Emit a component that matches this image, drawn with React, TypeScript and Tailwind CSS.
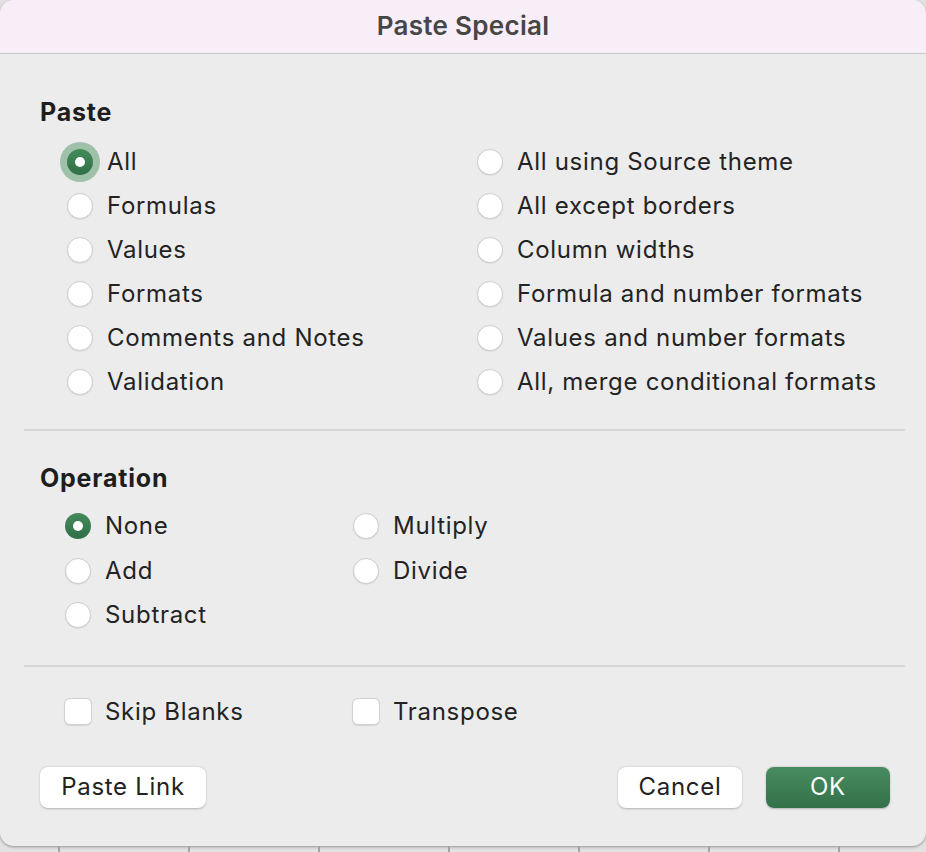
import React from "react";

const font = { fontFamily: "Inter, 'Noto Sans', 'Liberation Sans', sans-serif" };

function Radio({ checked, focus }: { checked?: boolean; focus?: boolean }) {
  if (checked) {
    return (
      <span className="relative flex h-[26px] w-[26px] shrink-0 items-center justify-center">
        {focus && (
          <span className="absolute -inset-[7px] rounded-full bg-[#8db699]/80" />
        )}
        <span className="relative flex h-[26px] w-[26px] items-center justify-center rounded-full bg-gradient-to-b from-[#448a5b] to-[#2f7046]">
          <span className="h-[10px] w-[10px] rounded-full bg-white" />
        </span>
      </span>
    );
  }
  return (
    <span className="h-[26px] w-[26px] shrink-0 rounded-full border border-[#cfcfcf] bg-white shadow-[0_0.5px_1px_rgba(0,0,0,0.12)]" />
  );
}

function RadioRow({ label, checked, focus, h = "h-[44px]" }: { label: string; checked?: boolean; focus?: boolean; h?: string }) {
  return (
    <div className={`flex ${h} items-center gap-[14px]`}>
      <Radio checked={checked} focus={focus} />
      <span className="text-[24px] leading-none tracking-[0.7px] text-[#232323]">{label}</span>
    </div>
  );
}

function Check({ label }: { label: string }) {
  return (
    <div className="flex h-[44px] items-center gap-[13px]">
      <span className="h-[27px] w-[28px] shrink-0 rounded-[6px] border border-[#d2d2d2] bg-white shadow-[0_0.5px_1px_rgba(0,0,0,0.1)]" />
      <span className="text-[24px] leading-none tracking-[0.7px] text-[#232323]">{label}</span>
    </div>
  );
}

export default function App() {
  const cells = [0, 1, 2, 3, 4, 5, 6];
  return (
    <div className="flex h-[852px] w-[926px] flex-col bg-[#e2e2e2]" style={font}>
      <div className="flex h-[846px] flex-col overflow-hidden rounded-[14px] bg-[#ececec] shadow-[0_1px_3px_rgba(0,0,0,0.35)]">
        <div className="flex h-[54px] shrink-0 items-center justify-center border-b border-[#c9c9c9] bg-[#f7eef7] pb-[3px]">
          <span className="text-[26px] font-semibold tracking-[0.3px] text-[#464646]">Paste Special</span>
        </div>

        <div className="flex flex-col px-[40px] pt-[46px]">
          <div className="text-[25px] font-bold leading-none tracking-[0.8px] text-[#1e1e1e]">Paste</div>
          <div className="mt-[15px] grid grid-cols-[410px_1fr] pl-[27px]">
            <div className="flex flex-col">
              <RadioRow label="All" checked focus />
              <RadioRow label="Formulas" />
              <RadioRow label="Values" />
              <RadioRow label="Formats" />
              <RadioRow label="Comments and Notes" />
              <RadioRow label="Validation" />
            </div>
            <div className="flex flex-col">
              <RadioRow label="All using Source theme" />
              <RadioRow label="All except borders" />
              <RadioRow label="Column widths" />
              <RadioRow label="Formula and number formats" />
              <RadioRow label="Values and number formats" />
              <RadioRow label="All, merge conditional formats" />
            </div>
          </div>
        </div>

        <div className="ml-[24px] mr-[21px] mt-[25px] h-[2px] bg-[#d7d7d7]" />

        <div className="flex flex-col px-[40px] pt-[35px]">
          <div className="text-[25px] font-bold leading-none tracking-[0.8px] text-[#1e1e1e]">Operation</div>
          <div className="mt-[13px] grid grid-cols-[288px_1fr] pl-[25px]">
            <div className="flex flex-col">
              <RadioRow label="None" checked h="h-[44.5px]" />
              <RadioRow label="Add" h="h-[44.5px]" />
              <RadioRow label="Subtract" h="h-[44.5px]" />
            </div>
            <div className="flex flex-col">
              <RadioRow label="Multiply" h="h-[44.5px]" />
              <RadioRow label="Divide" h="h-[44.5px]" />
            </div>
          </div>
        </div>

        <div className="ml-[24px] mr-[21px] mt-[27px] h-[2px] bg-[#d7d7d7]" />

        <div className="mt-[23px] grid grid-cols-[288px_1fr] pl-[64px]">
          <Check label="Skip Blanks" />
          <Check label="Transpose" />
        </div>

        <div className="mt-[33px] flex items-center px-[40px]">
          <button className="flex h-[41px] w-[166px] items-center justify-center rounded-[8px] bg-white text-[24px] tracking-[0.7px] text-[#222] shadow-[0_0.5px_2px_rgba(0,0,0,0.25)]">
            Paste Link
          </button>
          <div className="flex-1" />
          <button className="flex h-[41px] w-[124px] items-center justify-center rounded-[8px] bg-white text-[24px] tracking-[0.7px] text-[#222] shadow-[0_0.5px_2px_rgba(0,0,0,0.25)]">
            Cancel
          </button>
          <button className="ml-[24px] mr-[-4px] flex h-[41px] w-[124px] items-center justify-center rounded-[8px] bg-gradient-to-b from-[#4a8c61] to-[#337149] text-[24px] tracking-[0.7px] text-white shadow-[0_0.5px_2px_rgba(0,0,0,0.25)]">
            OK
          </button>
        </div>
      </div>
      <div className="flex h-[6px] shrink-0 pl-[58px]">
        {cells.map((c) => (
          <div key={c} className="h-full w-[130px] shrink-0 border-l-2 border-[#a3a3a3]" />
        ))}
      </div>
    </div>
  );
}
